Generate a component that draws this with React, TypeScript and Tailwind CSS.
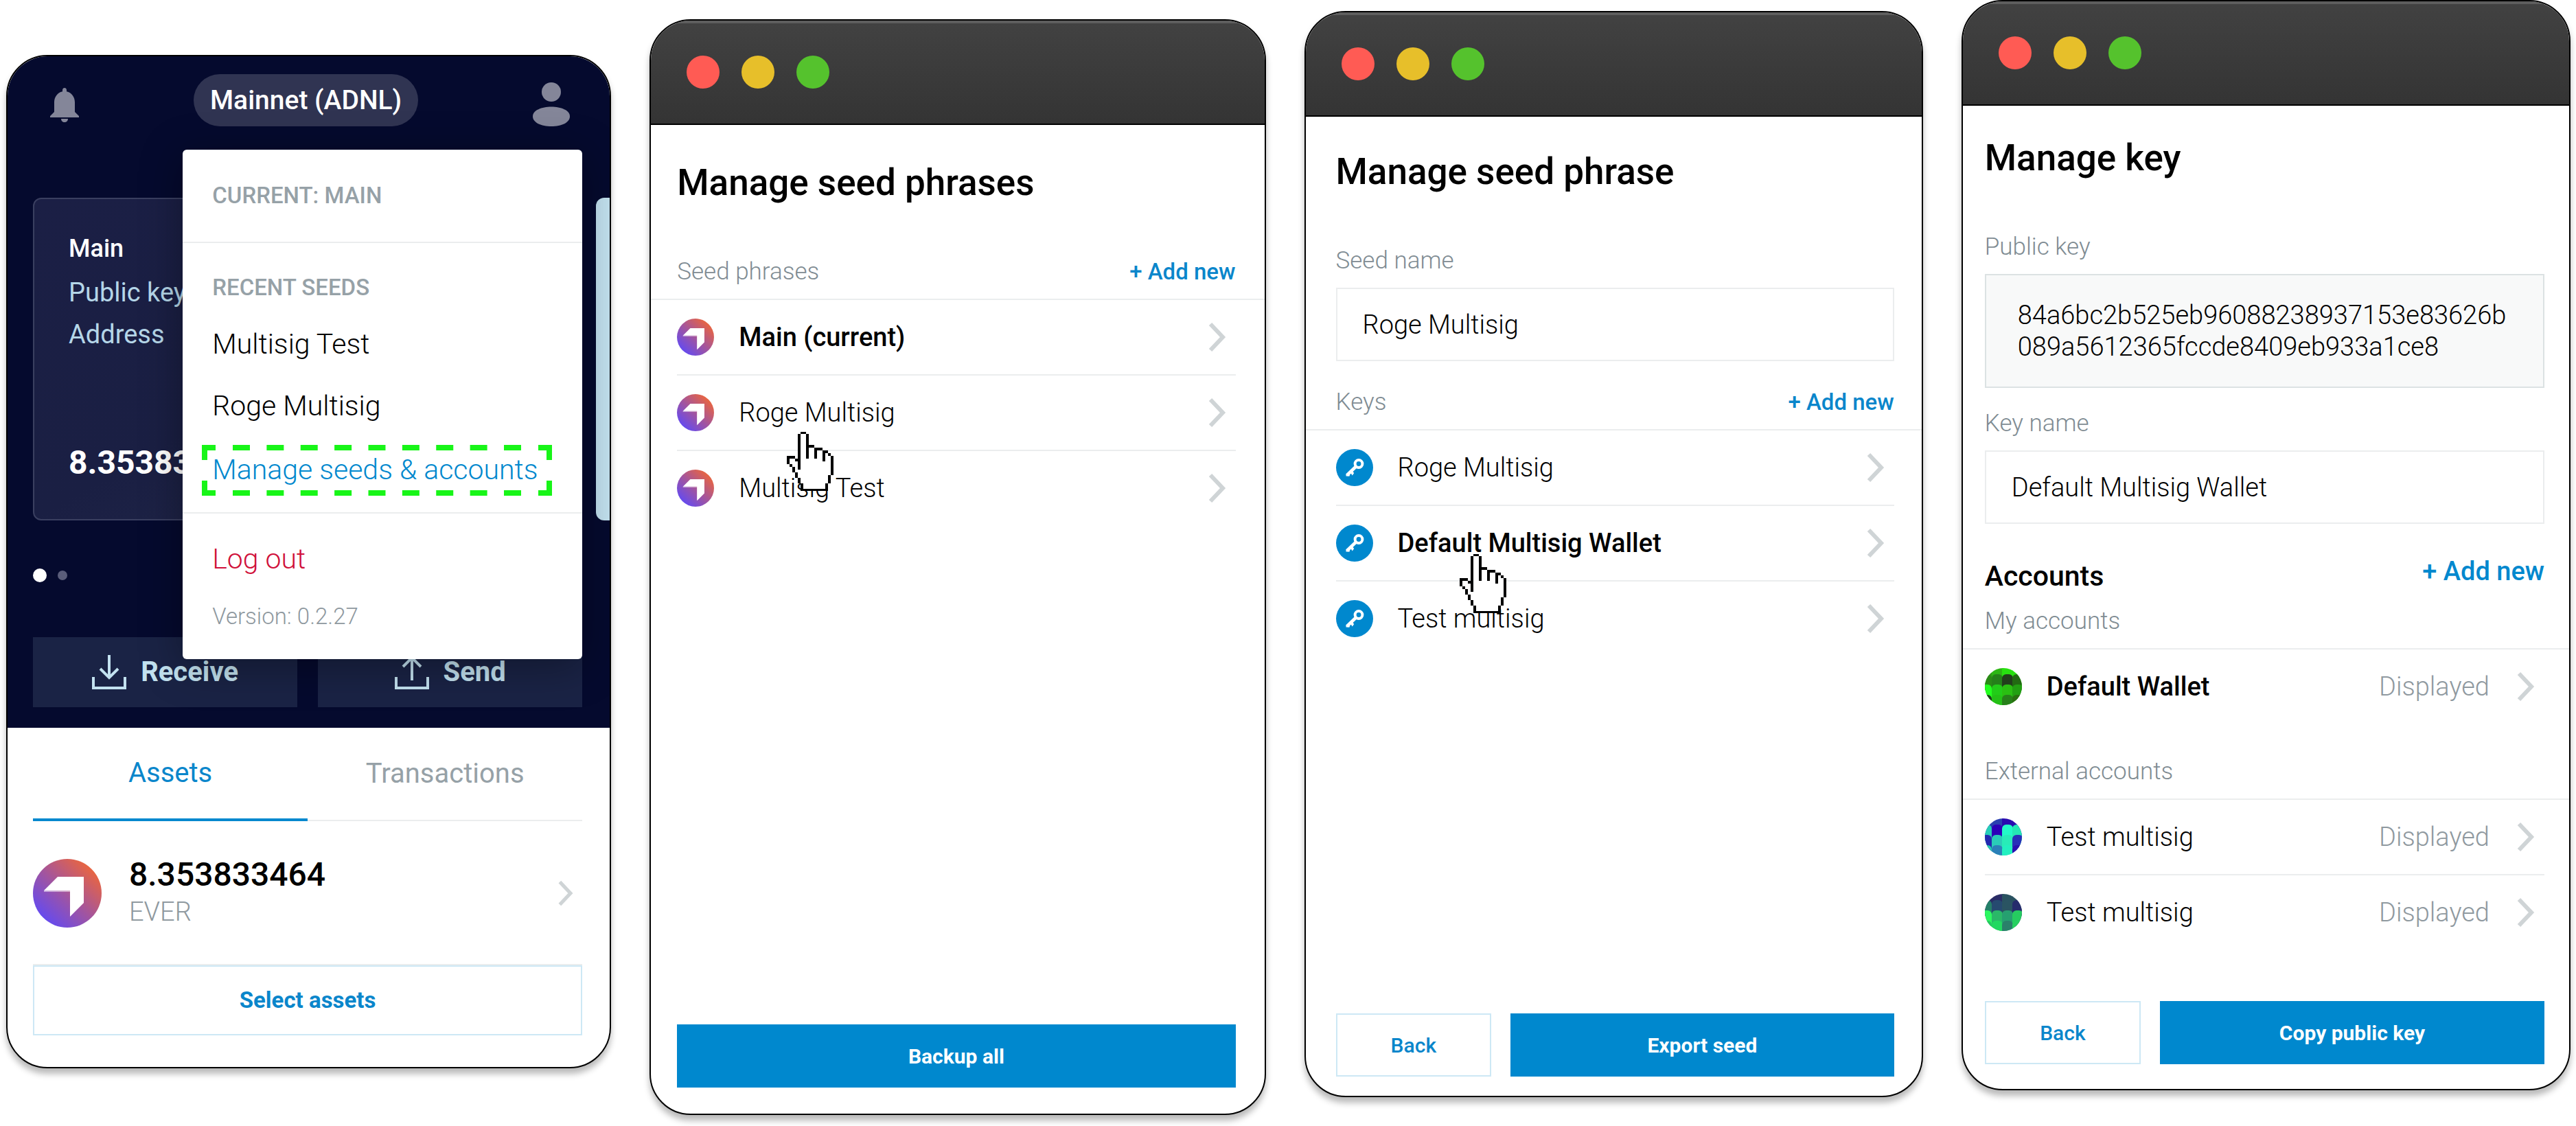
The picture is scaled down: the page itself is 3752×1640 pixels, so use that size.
import React from "react";

const ROW_TOPS = [-8, 9, 24, 39];
const COLUMN_LEFTS = [-6, 10, 25, 40];

function Chevron({ small = false }: { small?: boolean }) {
  return (
    <svg
      viewBox="0 0 26 44"
      className={small ? "h-[38px] w-6 shrink-0" : "h-11 w-[26px] shrink-0"}
      fill="none"
      aria-hidden="true"
    >
      <path d="M3 3l18 19L3 41" stroke="#cfd4d6" strokeWidth="6" />
    </svg>
  );
}

function EverLogo({ className, id }: { className: string; id: string }) {
  return (
    <svg viewBox="0 0 100 100" className={className} aria-hidden="true">
      <defs>
        <linearGradient id={id} x1="0.15" y1="0.88" x2="0.86" y2="0.14">
          <stop offset="0" stopColor="#644af0" />
          <stop offset="0.5" stopColor="#a4559c" />
          <stop offset="1" stopColor="#e96540" />
        </linearGradient>
      </defs>
      <circle cx="50" cy="50" r="50" fill={`url(#${id})`} />
      <path d="M16 46h38v2H16z" fill="#fff" opacity="0.5" />
      <path d="M36 26h38v38L54 84V46H16z" fill="#fff" />
    </svg>
  );
}

function KeyIcon() {
  return (
    <svg viewBox="0 0 54 54" className="size-[54px] shrink-0" fill="none" aria-hidden="true">
      <circle cx="27" cy="27" r="27" fill="#0088ce" />
      <circle cx="33" cy="21.5" r="5.4" stroke="#fff" strokeWidth="4" />
      <path d="M29 25.5L16 38" stroke="#fff" strokeWidth="4.6" />
      <path d="M14.5 36v3.6h5.3v-4M20.500 33.500l3.200 5 2.500-3.500-2.500-3" fill="#fff" />
    </svg>
  );
}

function Avatar({ id, colors }: { id: string; colors: string[][] }) {
  return (
    <svg viewBox="0 0 54 54" className="size-[54px] shrink-0" aria-hidden="true">
      <defs>
        <clipPath id={id}>
          <circle cx="27" cy="27" r="27" />
        </clipPath>
      </defs>
      <g clipPath={`url(#${id})`}>
        {colors.map((row, r) =>
          row.map((color, c) => (
            <rect key={`${r}-${c}`} x={COLUMN_LEFTS[c]} y={ROW_TOPS[r]} width="16" height="40" rx="6" fill={color} />
          )),
        )}
      </g>
    </svg>
  );
}

function HandCursor({ className }: { className: string }) {
  return (
    <svg viewBox="48 54 204 257" className={className} shapeRendering="crispEdges" aria-hidden="true">
      <path
        d="M102 60h36v57h30v12h36v12h24v12h18v90h-12v36h-12v26H114v-26h-12v-24H90v-24H78v-24H66v-12H54v-30h30v12h18z"
        fill="#fff"
      />
      <path
        d="M108 54h24v9h-24zM96 63h12v155H96zM132 63h12v107h-12zM144 111h24v12h-24zM168 123h36v12h-36zM168 123h12v47h-12zM204 135h24v12h-24zM204 135h12v47h-12zM228 147h12v12h-12zM240 159h12v83h-12zM228 242h12v36h-12zM216 278h12v24h-12zM120 301h108v10H120zM108 278h12v33h-12zM96 254h12v24H96zM84 230h12v24H84zM72 206h12v24H72zM60 194h12v12H60zM48 159h12v35H48zM48 159h36v11H48zM84 170h12v12H84z"
        fill="#000"
      />
    </svg>
  );
}

function TransferIcon({ up = false }: { up?: boolean }) {
  return (
    <svg viewBox="0 0 50 50" className="size-[50px] shrink-0" fill="none" stroke="currentColor" strokeWidth="4" aria-hidden="true">
      <path d="M2 32v16h46V32" />
      {up ? <path d="M25 37V4M12 17L25 4l13 13" /> : <path d="M25 0v33M12 20l13 13 13-13" />}
    </svg>
  );
}

function Window({
  title,
  className,
  titleClass,
  children,
}: {
  title: string;
  className: string;
  titleClass: string;
  children: React.ReactNode;
}) {
  return (
    <section
      className={`flex min-w-0 flex-col overflow-hidden rounded-[60px] border-2 border-black bg-white shadow-[0_8px_10px_rgba(0,0,0,0.28)] ${className}`}
    >
      <div className="flex h-[152px] shrink-0 items-center gap-8 border-b-2 border-black bg-linear-to-b from-[#424242] to-[#343434] pl-[52px] shadow-[inset_0_4px_0_#5e5e5e]">
        <span className="size-12 rounded-full bg-[#ff5b54]" />
        <span className="size-12 rounded-full bg-[#e7bf2a]" />
        <span className="size-12 rounded-full bg-[#55c22d]" />
      </div>
      <h2 className={`mb-[74px] text-[53px] leading-[72px] font-medium ${titleClass}`}>{title}</h2>
      {children}
    </section>
  );
}

function ListHeader({ label, className, action = false }: { label: string; className: string; action?: boolean }) {
  return (
    <div className={`flex items-center justify-between border-b-2 border-[#ebedee] pb-[19px] text-[35px] leading-10 ${className}`}>
      <h3 className="font-light text-[#7f8c93]">{label}</h3>
      {action && (
        <button type="button" className="text-[33px] font-medium text-[#0a86cb]">
          + Add new
        </button>
      )}
    </div>
  );
}

function Row({
  icon,
  label,
  bold = false,
  status,
  cursor,
}: {
  icon: React.ReactNode;
  label: string;
  bold?: boolean;
  status?: string;
  cursor?: string;
}) {
  return (
    <li className="relative border-b-2 border-[#ebedee] last:border-transparent">
      <button type="button" className="flex h-[108px] w-full items-center pr-3.5 text-left text-[38px]">
        {icon}
        <span className={bold ? "ml-9 flex-1 font-medium" : "ml-9 flex-1 font-light"}>{label}</span>
        {status && <span className="mr-10 font-light text-[#8f999f]">{status}</span>}
        <Chevron />
      </button>
      {cursor && <HandCursor className={`absolute z-10 h-[86px] w-[68px] ${cursor}`} />}
    </li>
  );
}

function Field({ id, label, value }: { id: string; label: string; value: string }) {
  return (
    <div className="flex flex-col">
      <label htmlFor={id} className="mb-[19px] text-[35px] leading-10 font-light text-[#7f8c93]">
        {label}
      </label>
      <input
        id={id}
        defaultValue={value}
        className="h-[107px] w-full border-2 border-[#ebedee] bg-white px-[37px] text-[38px] font-light"
      />
    </div>
  );
}

function Footer({ action, className, back = true }: { action: string; className: string; back?: boolean }) {
  return (
    <div className={`mt-auto flex gap-7 text-[30px] ${className}`}>
      {back && (
        <button type="button" className="h-[92px] flex-[224] border-2 border-[#cde8f5] font-medium text-[#0a86cb]">
          Back
        </button>
      )}
      <button type="button" className="h-[92px] flex-[562] bg-[#0088ce] font-bold text-white">
        {action}
      </button>
    </div>
  );
}

function WalletMenu() {
  return (
    <div className="absolute top-[136px] right-10 z-10 flex w-[582px] flex-col rounded-md bg-white text-left text-[41px] font-light shadow-[0_10px_60px_rgba(0,0,0,0.35)]">
      <h3 className="border-b-2 border-[#ebedee] px-[43px] text-[33px] leading-[134px] font-medium text-[#96a1a7]">
        CURRENT: MAIN
      </h3>
      <div className="flex flex-col items-start border-b-2 border-[#ebedee] pt-11 pb-6">
        <h3 className="mb-[17px] px-[43px] text-[33px] leading-[42px] font-medium text-[#96a1a7]">RECENT SEEDS</h3>
        <button type="button" className="h-[90px] px-[43px]">
          Multisig Test
        </button>
        <button type="button" className="h-[90px] px-[43px]">
          Roge Multisig
        </button>
        <button type="button" className="relative mt-[11px] ml-7 h-[74px] w-[510px] px-[15px] text-left whitespace-nowrap text-[#0088ce]">
          <svg viewBox="0 0 510 74" className="absolute inset-0 size-full" fill="none" stroke="#18f518" strokeWidth="8" aria-hidden="true">
            <path d="M20 4H4v18M490 4h16v18M20 70H4V52M490 70h16V52" />
            <path d="M45 4h420M45 70h420" strokeDasharray="25 24.375" />
          </svg>
          Manage seeds &amp; accounts
        </button>
      </div>
      <button type="button" className="mt-9 self-start px-[43px] leading-[60px] text-[#d0103a]">
        Log out
      </button>
      <p className="mt-[34px] mb-[42px] px-[43px] text-[33px] leading-10 text-[#8f999f]">Version: 0.2.27</p>
    </div>
  );
}

function WalletPanel() {
  return (
    <section className="relative mt-20 mb-[84px] flex min-w-0 flex-col overflow-hidden rounded-[60px] border-2 border-black bg-white shadow-[0_8px_10px_rgba(0,0,0,0.28)]">
      <div className="bg-[#050a2e] pt-[26px] pb-[30px] text-white">
        <div className="flex h-[76px] items-start justify-between pr-[58px] pl-[62px]">
          <button type="button" aria-label="Notifications">
            <svg viewBox="0 0 42 50" className="mt-5 h-[50px] w-[42px]" fill="#848699" aria-hidden="true">
              <path d="M21 0c2 0 3 1.500 3 3.500v1.800C31.500 7 36 13.500 36 21v14l6 6v2H0v-2l6-6V21C6 13.500 10.500 7 18 5.300V3.500C18 1.500 19 0 21 0zM16 45h10c0 3-2.200 5-5 5s-5-2-5-5z" />
            </svg>
          </button>
          <button type="button" className="h-[76px] rounded-[38px] bg-[#303452] px-6 text-[39px] font-medium">
            Mainnet (ADNL)
          </button>
          <button type="button" aria-label="Profile">
            <svg viewBox="0 0 54 64" className="mt-3 h-16 w-[54px]" fill="#848699" aria-hidden="true">
              <circle cx="27" cy="14" r="14" />
              <path d="M27 35.500c14 0 27 5 27 14S42 64 27 64 0 58.500 0 49.500s13-14 27-14z" />
            </svg>
          </button>
        </div>
        <div className="mt-[104px] flex gap-5 overflow-hidden pl-[37px]">
          <article className="flex h-[470px] w-[calc(100%-40px)] shrink-0 flex-col rounded-xl border-2 border-[#3a3f60] bg-linear-to-br from-[#1b1f45] via-[#1a1f43] to-[#262b4c] px-[50px] pt-[41px] pb-[51px]">
            <h3 className="text-[36px] leading-[62px] font-medium">Main</h3>
            <p className="pt-0.5 text-[38px] leading-[62px] text-[#b5d6e8]">Public key</p>
            <p className="text-[38px] leading-[60px] text-[#b5d6e8]">Address</p>
            <p className="mt-auto text-[48px] leading-[62px] font-bold">8.35383</p>
          </article>
          <article className="h-[470px] w-full shrink-0 rounded-xl bg-[#c3e2f0]" />
        </div>
        <div className="mt-[70px] flex h-5 items-center gap-4 pl-[37px]">
          <span className="size-5 rounded-full bg-white" />
          <span className="size-3.5 rounded-full bg-[#5a5d7a]" />
        </div>
        <div className="mt-20 grid grid-cols-2 gap-[30px] pr-10 pl-[37px] text-[40px] font-bold text-[#c3e2f0]">
          <button type="button" className="flex h-[102px] items-center justify-center gap-[21px] bg-[#1a2345]">
            <TransferIcon />
            Receive
          </button>
          <button type="button" className="flex h-[102px] items-center justify-center gap-[21px] bg-[#1a2345]">
            <TransferIcon up />
            Send
          </button>
        </div>
      </div>
      <div className="flex flex-1 flex-col pr-10 pl-[37px]">
        <div role="tablist" className="grid grid-cols-2 text-[40px]">
          <button type="button" role="tab" aria-selected="true" className="h-[136px] border-b-4 border-[#0088ce] text-[#0a86cb]">
            Assets
          </button>
          <button type="button" role="tab" aria-selected="false" className="h-[136px] border-b-2 border-[#ebedee] text-[#96a1a7]">
            Transactions
          </button>
        </div>
        <button type="button" className="mt-[51px] flex items-center pr-3 text-left">
          <EverLogo id="asset-ever" className="size-[100px] shrink-0" />
          <span className="ml-10 flex flex-1 flex-col leading-[54px]">
            <span className="text-[48px] font-medium">8.353833464</span>
            <span className="text-[38px] font-light text-[#8f999f]">EVER</span>
          </span>
          <Chevron small />
        </button>
        <button
          type="button"
          className="mt-auto mb-[46px] h-[102px] border-2 border-[#cde8f5] text-[33px] font-bold text-[#0a86cb] shadow-[0_-2px_0_#ebedee]"
        >
          Select assets
        </button>
      </div>
      <WalletMenu />
    </section>
  );
}

const WALLET_COLORS = [
  ["#2f9a18", "#2cb614", "#28e010", "#28e010"],
  ["#2a8a16", "#25801a", "#223f1c", "#226a12"],
  ["#22ff1e", "#22cc18", "#2abf12", "#22a012"],
  ["#203a1c", "#24c016", "#27801a", "#2a7010"],
];
const MULTISIG_COLORS = [
  ["#2a40b0", "#2a40b0", "#2a0cb0", "#2a0cb0"],
  ["#26cdb8", "#2c00b8", "#22fac8", "#25e8b4"],
  ["#2428b0", "#2accb8", "#28ecb8", "#2830b8"],
  ["#25ccb0", "#2b80b8", "#22f0c0", "#2c10b0"],
];
const SECOND_MULTISIG_COLORS = [
  ["#2a2c66", "#2a2c66", "#2a5260", "#2a5260"],
  ["#248068", "#264a70", "#2a5462", "#262c6c"],
  ["#2cf860", "#2ab868", "#26a070", "#26cc60"],
  ["#26c860", "#22d860", "#2a806a", "#26d060"],
];

export default function App() {
  return (
    <main className="grid min-h-screen grid-cols-[882fr_898fr_902fr_888fr] gap-x-14 bg-white pr-2 pl-[9px] font-['Roboto',sans-serif] text-black">
      <WalletPanel />

      <Window title="Manage seed phrases" className="mt-7 mb-4" titleClass="pt-12 pl-[38px]">
        <ListHeader label="Seed phrases" className="pr-[42px] pl-[38px]" action />
        <ul className="pr-[42px] pl-[38px]">
          <Row icon={<EverLogo id="seed-main" className="size-[54px] shrink-0" />} label="Main (current)" bold />
          <Row
            icon={<EverLogo id="seed-roge" className="size-[54px] shrink-0" />}
            label="Roge Multisig"
            cursor="top-[82px] left-40"
          />
          <Row icon={<EverLogo id="seed-test" className="size-[54px] shrink-0" />} label="Multisig Test" />
        </ul>
        <Footer action="Backup all" back={false} className="pr-[42px] pb-[38px] pl-[38px]" />
      </Window>

      <Window title="Manage seed phrase" className="mt-4 mb-[42px]" titleClass="pt-11 pl-11">
        <div className="pr-10 pl-11">
          <Field id="seed-name" label="Seed name" value="Roge Multisig" />
        </div>
        <ListHeader label="Keys" className="mt-10 pr-10 pl-11" action />
        <ul className="pr-10 pl-11">
          <Row icon={<KeyIcon />} label="Roge Multisig" />
          <Row icon={<KeyIcon />} label="Default Multisig Wallet" bold cursor="top-[70px] left-[180px]" />
          <Row icon={<KeyIcon />} label="Test multisig" />
        </ul>
        <Footer action="Export seed" className="pr-10 pb-7 pl-11" />
      </Window>

      <Window title="Manage key" className="mb-[52px]" titleClass="pt-10 pl-8">
        <div className="flex flex-col pr-9 pl-8">
          <h3 className="mb-[19px] text-[35px] leading-10 font-light text-[#7f8c93]">Public key</h3>
          <p className="mb-8 border-2 border-[#dce2e3] bg-[#f8f9f9] px-[46px] py-[35px] text-[38px] leading-[46px] font-light">
            <span className="block">84a6bc2b525eb96088238937153e83626b</span>
            <span className="block">089a5612365fccde8409eb933a1ce8</span>
          </p>
          <Field id="key-name" label="Key name" value="Default Multisig Wallet" />
          <div className="mt-[46px] mb-4 flex items-start justify-between font-medium">
            <h3 className="text-[41px] leading-[60px]">Accounts</h3>
            <button type="button" className="text-[38px] leading-[46px] text-[#0088ce]">
              + Add new
            </button>
          </div>
        </div>
        <ListHeader label="My accounts" className="pr-9 pl-8" />
        <ul className="pr-9 pl-8">
          <Row icon={<Avatar id="avatar-wallet" colors={WALLET_COLORS} />} label="Default Wallet" bold status="Displayed" />
        </ul>
        <ListHeader label="External accounts" className="mt-12 pr-9 pl-8" />
        <ul className="pr-9 pl-8">
          <Row icon={<Avatar id="avatar-test-1" colors={MULTISIG_COLORS} />} label="Test multisig" status="Displayed" />
          <Row icon={<Avatar id="avatar-test-2" colors={SECOND_MULTISIG_COLORS} />} label="Test multisig" status="Displayed" />
        </ul>
        <Footer action="Copy public key" className="pr-9 pb-9 pl-8" />
      </Window>
    </main>
  );
}
